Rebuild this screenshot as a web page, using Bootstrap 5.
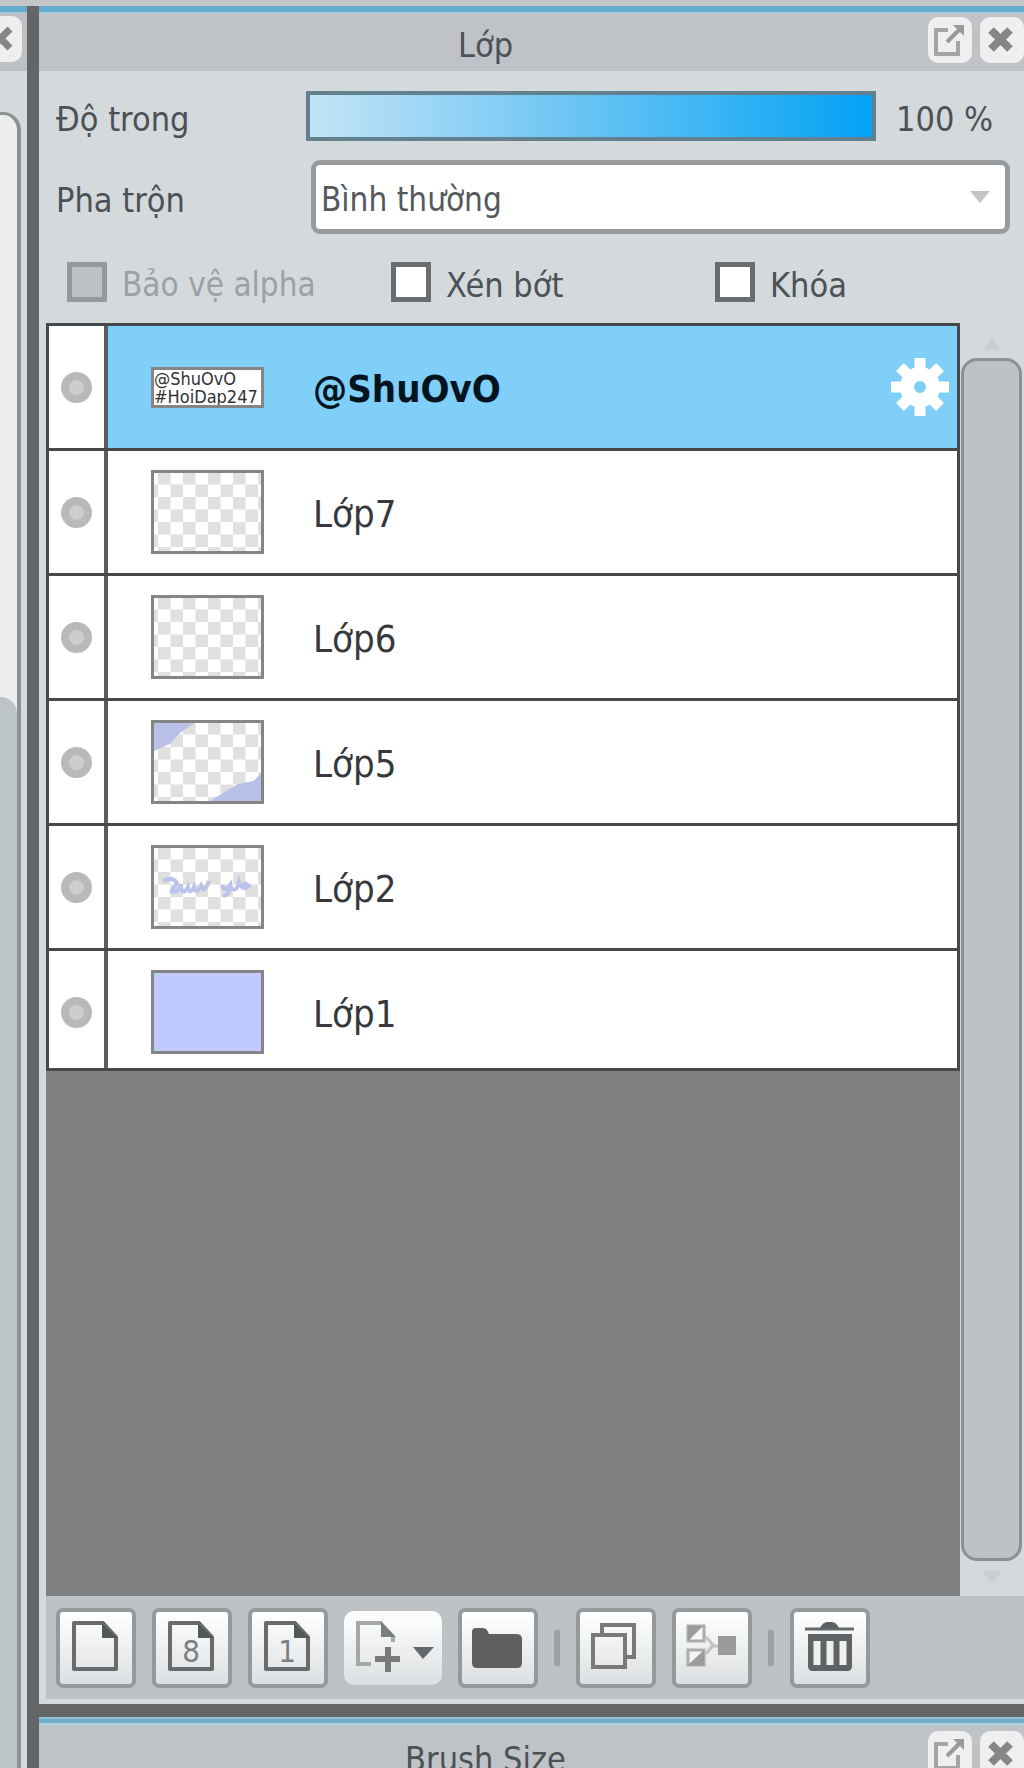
<!DOCTYPE html>
<html lang="vi">
<head>
<meta charset="utf-8">
<meta name="viewport" content="width=device-width, initial-scale=1">
<title>Lớp</title>
<link href="https://cdn.jsdelivr.net/npm/bootstrap@5.3.0/dist/css/bootstrap.min.css" rel="stylesheet">
<style>
body{font-family:"DejaVu Sans Condensed","Noto Sans",sans-serif;font-size:34px;line-height:40px;color:#4c5156;background:#d4d9dc}
.app-frame{border-top:6px solid #c4c5c6}
.side-strip{width:27px;background:#d4d9dc}
.blue-line{height:7px;background:#65abd0;border-bottom:1px solid #9fcfe4}
.side-head{height:58px;background:#bdc1c5}
.side-head button{width:22px;height:46px;margin-top:3px;background:#eee;border-radius:0 10px 10px 0;overflow:hidden}
.side-track{margin-top:41px;margin-right:6px;background:#eee;border:3px solid #8d9194;border-width:3px 4px 0 0;border-radius:0 18px 0 0}
.side-thumb{margin-top:582px;background:#bdc4c8;border-radius:0 16px 0 0}
.splitter{width:12px;background:#636566}
.main-col{min-width:0}
.panel-head{height:58px;background:#bfc3c7}
.panel-head.tall{height:43px;padding-top:6px}
.panel-head h1{font-size:34px;line-height:40px;padding:12px 0 0 4px}
.panel-head.tall h1{padding-top:8px}
.head-btn{width:44px;height:46px;background:#efefef;border-radius:10px}
.controls{padding:20px 14px 0 17px}
.name-col,.opacity-val,.ticks label{padding-top:6px}
.name-col{width:250px}
.opacity-bar{appearance:none;min-width:0;height:50px;border:4px solid #62808e;background:linear-gradient(90deg,#c3e4f7,#7ccbf4 38%,#03a2f4)}
.opacity-bar::-webkit-slider-thumb{appearance:none;width:1px;height:1px;opacity:0}
.opacity-val{width:134px;padding-left:20px}
.blend-row{margin-top:19px}
.blend-row .name-col{width:255px}
.blend{height:74px;border:5px solid #979b9d;border-radius:9px;background:#fff;padding:6px 40px 0 5px;font-size:33px;color:#55595d}
.caret{right:20px;top:31px}
.ticks{margin-top:25px;padding-left:11px}
.ticks>div{width:324px;gap:15px}
.ticks>div:last-child{width:auto}
.tick{appearance:none;width:40px;height:40px;border:5px solid #696d70;background:#fff;margin:0}
.tick:disabled{border-color:#95999c;background:#bcc2c5}
.faded{color:#9da1a4;font-size:33px}
.list-zone{margin:18px 0 0 7px}
.layer-well{background:#808080}
.layers{border:3px solid #45494c;border-bottom:0}
.layer{border-bottom:3px solid #45494c;background:#fff}
.eye-cell{border-right:4px solid #5a5d60;width:59px;padding-top:19px}
.body-cell{padding:19px 7px 19px 43px;font-size:38px;line-height:44px;color:#36383c}
.layer:last-child .body-cell{padding-bottom:14px}
.line-box{height:84px}
.layer-name{padding-top:3px}
.eye-cell button{width:55px;height:84px}
.eye-dot{width:31px;height:31px;border-radius:50%;background:#cdcdcd;border:8px solid #b9b9b9}
.thumb-box{width:113px;height:84px;border:3px solid #858585;background:#fff;margin-right:49px}
.thumb-box.mini{height:41px;font-size:18px;line-height:18px;color:#333}
.picked .body-cell{background:#7fcff8;color:#04141f}
.picked .layer-name{font-weight:700}
.scroll-col{width:64px;padding-top:10px}
.scroll-thumb{background:#bdc2c6;border:3px solid #8c9093;border-radius:16px;margin:5px 2px 10px 1px}
.toolbar-zone{margin-left:7px;height:103px;background:#bdc2c6;padding-left:10px;gap:16px}
.tool{width:80px;height:80px;border:4px solid #94999c;border-radius:7px;background:linear-gradient(#fff,#dcdfe1)}
.tool.plain{width:98px;height:74px;border:0;border-radius:10px}
.sep{width:6px;height:36px;background:#9ca1a5;border-radius:2px}
.bottom-edge{height:5px}
.band{height:13px;background:#636566}
.btm{height:8px;background:#72acc4;border-top:2px solid #8cc0dc;border-bottom:2px solid #a9cfe2}
</style>
</head>
<body>
<svg width="0" height="0" class="position-absolute" aria-hidden="true">
<defs>
<pattern id="chk" x="4" y="-1" width="25" height="25" patternUnits="userSpaceOnUse"><path d="M0 0h12.5v12.5H0zM12.5 12.5H25V25H12.5z" fill="#e0e0e0"/></pattern>
<symbol id="pop" viewBox="0 0 44 46"><path d="M20 13H8v24h22V24" fill="none" stroke="#a3a5a7" stroke-width="4"/><path d="M19 25L31 13" stroke="#989b9d" stroke-width="4"/><path d="M25 8h11v11z" fill="#989b9d"/></symbol>
<symbol id="shut" viewBox="0 0 44 46"><path d="M11 13L30 32M30 13L11 32" stroke="#858687" stroke-width="8"/></symbol>
<symbol id="sheet" viewBox="0 0 72 72"><path d="M14 11H43L56 25V57H14z" fill="none" stroke="#696c6e" stroke-width="4" stroke-linejoin="round"/><path d="M42 11v15h15z" fill="#55585a"/></symbol>
</defs>
</svg>
<div class="app-frame d-flex vh-100 overflow-hidden">
  <aside class="side-strip d-flex flex-column flex-shrink-0 overflow-hidden">
    <div class="blue-line flex-shrink-0"></div>
    <div class="side-head flex-shrink-0"><button class="border-0 p-0 d-block" aria-label="Đóng"><svg width="22" height="46"><path d="M-9 13L10 32M10 13L-9 32" stroke="#858687" stroke-width="7"/></svg></button></div>
    <div class="side-track flex-grow-1 d-flex flex-column"><div class="side-thumb flex-grow-1"></div></div>
  </aside>
  <div class="splitter flex-shrink-0"></div>
  <main class="main-col flex-grow-1 d-flex flex-column">
    <div class="blue-line flex-shrink-0"></div>
    <header class="panel-head d-flex flex-shrink-0">
      <h1 class="flex-grow-1 text-center m-0 fw-normal">Lớp</h1>
      <div class="d-flex gap-2 pt-1"><button class="head-btn border-0 p-0" aria-label="Tách"><svg width="44" height="46" class="d-block"><use href="#pop"/></svg></button><button class="head-btn border-0 p-0" aria-label="Đóng"><svg width="44" height="46" class="d-block"><use href="#shut"/></svg></button></div>
    </header>
    <section class="controls">
      <div class="d-flex align-items-center">
        <label class="name-col flex-shrink-0" for="opacity">Độ trong</label>
        <input id="opacity" class="opacity-bar flex-grow-1 m-0" type="range" value="100">
        <output class="opacity-val flex-shrink-0 text-nowrap" for="opacity">100 %</output>
      </div>
      <div class="blend-row d-flex align-items-center">
        <label class="name-col flex-shrink-0" for="blend">Pha trộn</label>
        <div class="position-relative flex-grow-1">
          <select id="blend" class="blend form-select w-100"><option>Bình thường</option></select>
          <svg class="caret position-absolute" width="20" height="12" aria-hidden="true"><path d="M0 0h20L10 12z" fill="#c2c4c5"/></svg>
        </div>
      </div>
      <div class="ticks d-flex">
        <div class="d-flex align-items-center"><input class="tick" type="checkbox" id="t1" disabled><label for="t1" class="faded">Bảo vệ alpha</label></div>
        <div class="d-flex align-items-center"><input class="tick" type="checkbox" id="t2"><label for="t2">Xén bớt</label></div>
        <div class="d-flex align-items-center"><input class="tick" type="checkbox" id="t3"><label for="t3">Khóa</label></div>
      </div>
    </section>
    <section class="list-zone d-flex flex-grow-1">
      <div class="layer-well flex-grow-1">
        <ul class="layers list-unstyled m-0">
          <li class="layer picked d-flex">
            <div class="eye-cell flex-shrink-0"><button class="border-0 p-0 bg-transparent d-flex align-items-center justify-content-center" aria-label="Hiện"><span class="eye-dot"></span></button></div>
            <div class="body-cell flex-grow-1"><div class="line-box d-flex align-items-center"><div class="thumb-box mini overflow-hidden text-nowrap flex-shrink-0">@ShuOvO<br>#HoiDap247</div><span class="layer-name flex-grow-1">@ShuOvO</span>
              <button class="border-0 p-0 bg-transparent" aria-label="Cài đặt"><svg class="d-block" width="60" height="60" viewBox="-30 -30 60 60"><path d="M0-29V-12M0 12V29M-29 0H-12M12 0H29M-20-20L-9-9M9 9L20 20M-20 20L-9 9M9-9L20-20" stroke="#fff" stroke-width="11"/><circle r="13" fill="none" stroke="#fff" stroke-width="14"/></svg></button></div></div>
          </li>
          <li class="layer d-flex">
            <div class="eye-cell flex-shrink-0"><button class="border-0 p-0 bg-transparent d-flex align-items-center justify-content-center" aria-label="Hiện"><span class="eye-dot"></span></button></div>
            <div class="body-cell flex-grow-1"><div class="line-box d-flex align-items-center"><div class="thumb-box"><svg class="d-block" width="107" height="78"><rect width="107" height="78" fill="url(#chk)"/></svg></div><span class="layer-name">Lớp7</span></div></div>
          </li>
          <li class="layer d-flex">
            <div class="eye-cell flex-shrink-0"><button class="border-0 p-0 bg-transparent d-flex align-items-center justify-content-center" aria-label="Hiện"><span class="eye-dot"></span></button></div>
            <div class="body-cell flex-grow-1"><div class="line-box d-flex align-items-center"><div class="thumb-box"><svg class="d-block" width="107" height="78"><rect width="107" height="78" fill="url(#chk)"/></svg></div><span class="layer-name">Lớp6</span></div></div>
          </li>
          <li class="layer d-flex">
            <div class="eye-cell flex-shrink-0"><button class="border-0 p-0 bg-transparent d-flex align-items-center justify-content-center" aria-label="Hiện"><span class="eye-dot"></span></button></div>
            <div class="body-cell flex-grow-1"><div class="line-box d-flex align-items-center"><div class="thumb-box"><svg class="d-block" width="107" height="78"><rect width="107" height="78" fill="url(#chk)"/><path d="M0 0H40L26 10L16 21L0 28zM107 78H56L72 68L84 61L99 58L107 51z" fill="#b9c1e6"/></svg></div><span class="layer-name">Lớp5</span></div></div>
          </li>
          <li class="layer d-flex">
            <div class="eye-cell flex-shrink-0"><button class="border-0 p-0 bg-transparent d-flex align-items-center justify-content-center" aria-label="Hiện"><span class="eye-dot"></span></button></div>
            <div class="body-cell flex-grow-1"><div class="line-box d-flex align-items-center"><div class="thumb-box"><svg class="d-block" width="107" height="78"><rect width="107" height="78" fill="url(#chk)"/><path d="M9 33q9-5 14 2q-7 9-5 9q8 0 9-8q1 14 7 3q2 9 6 0q2 8 7-1q3 9 8-5M68 37q2 8 8 0q0 10-7 11M76 38q6 9 9-4q3 10 10 4q-6-6-5 2" fill="none" stroke="#bcc3ea" stroke-width="4"/></svg></div><span class="layer-name">Lớp2</span></div></div>
          </li>
          <li class="layer d-flex">
            <div class="eye-cell flex-shrink-0"><button class="border-0 p-0 bg-transparent d-flex align-items-center justify-content-center" aria-label="Hiện"><span class="eye-dot"></span></button></div>
            <div class="body-cell flex-grow-1"><div class="line-box d-flex align-items-center"><div class="thumb-box"><svg class="d-block" width="107" height="78"><rect width="107" height="78" fill="#bfcaff"/></svg></div><span class="layer-name">Lớp1</span></div></div>
          </li>
        </ul>
      </div>
      <div class="scroll-col flex-shrink-0 d-flex flex-column">
        <svg class="mx-auto flex-shrink-0" width="20" height="20"><path d="M0 17h20L10 5z" fill="#c9ced1"/></svg>
        <div class="scroll-thumb flex-grow-1"></div>
        <svg class="mx-auto flex-shrink-0" width="20" height="25"><path d="M0 0h20L10 12z" fill="#c9ced1"/></svg>
      </div>
    </section>
    <nav class="toolbar-zone d-flex align-items-center flex-shrink-0">
      <button class="tool p-0" aria-label="Lớp mới"><svg class="d-block" width="72" height="72"><use href="#sheet"/></svg></button>
      <button class="tool p-0" aria-label="Lớp 8 bit"><svg class="d-block" width="72" height="72"><use href="#sheet"/><text x="35" y="50" text-anchor="middle" font-size="31" fill="#7c7f81">8</text></svg></button>
      <button class="tool p-0" aria-label="Lớp 1 bit"><svg class="d-block" width="72" height="72"><use href="#sheet"/><text x="35" y="50" text-anchor="middle" font-size="31" fill="#7c7f81">1</text></svg></button>
      <button class="tool plain p-0" aria-label="Thêm lớp"><svg class="d-block" width="98" height="74"><path d="M27 53H14V12H38M49 25V31" fill="none" stroke="#a5a8a9" stroke-width="4"/><path d="M37 10L52 26H37z" fill="#7b7e80"/><path d="M31 48H56M44 36V61" stroke="#77797b" stroke-width="6"/><path d="M69 36H90L79 48z" fill="#66696b"/></svg></button>
      <button class="tool p-0" aria-label="Thư mục"><svg class="d-block" width="72" height="72"><path d="M10 20q0-4 4-4h7q4 0 6 6H54q6 0 6 5V51q0 5-5 5H15q-5 0-5-5z" fill="#5d5f60"/></svg></button>
      <span class="sep"></span>
      <button class="tool p-0" aria-label="Nhân đôi"><svg class="d-block" width="72" height="72"><path d="M22 22V13H54V45H46M13 23H45V55H13z" fill="none" stroke="#77797b" stroke-width="4"/></svg></button>
      <button class="tool p-0" aria-label="Gộp lớp"><svg class="d-block" width="72" height="72"><path d="M12 14H28V29H12zM12 38H28V53H12z" fill="#f5f5f5" stroke="#a9abac" stroke-width="3"/><path d="M12 14H27L12 29zM28 38V53H12z" fill="#999b9c"/><path d="M30 25L37 33L30 42M36 34H44" fill="none" stroke="#c0c2c3" stroke-width="3"/><path d="M42 24H60V43H42z" fill="#999b9c"/></svg></button>
      <span class="sep"></span>
      <button class="tool p-0" aria-label="Xóa"><svg class="d-block" width="72" height="72"><path d="M11 17H60" stroke="#65686a" stroke-width="3"/><path d="M26 16q3-6 7-6h5q4 0 7 6z" fill="#5d6062"/><path d="M14 22H58V54q0 5-5 5H19q-5 0-5-5z" fill="#606365"/><path d="M23 29V53M36 29V53M49 29V53" stroke="#eff0f0" stroke-width="7"/></svg></button>
    </nav>
    <div class="bottom-edge flex-shrink-0"></div>
    <div class="band flex-shrink-0"></div>
    <div class="btm flex-shrink-0"></div>
    <header class="panel-head tall d-flex flex-shrink-0 overflow-hidden">
      <h1 class="flex-grow-1 text-center m-0 fw-normal">Brush Size</h1>
      <div class="d-flex gap-2"><button class="head-btn border-0 p-0" aria-label="Tách"><svg width="44" height="46" class="d-block"><use href="#pop"/></svg></button><button class="head-btn border-0 p-0" aria-label="Đóng"><svg width="44" height="46" class="d-block"><use href="#shut"/></svg></button></div>
    </header>
  </main>
</div>
<script src="https://cdn.jsdelivr.net/npm/bootstrap@5.3.0/dist/js/bootstrap.bundle.min.js"></script>
</body>
</html>
